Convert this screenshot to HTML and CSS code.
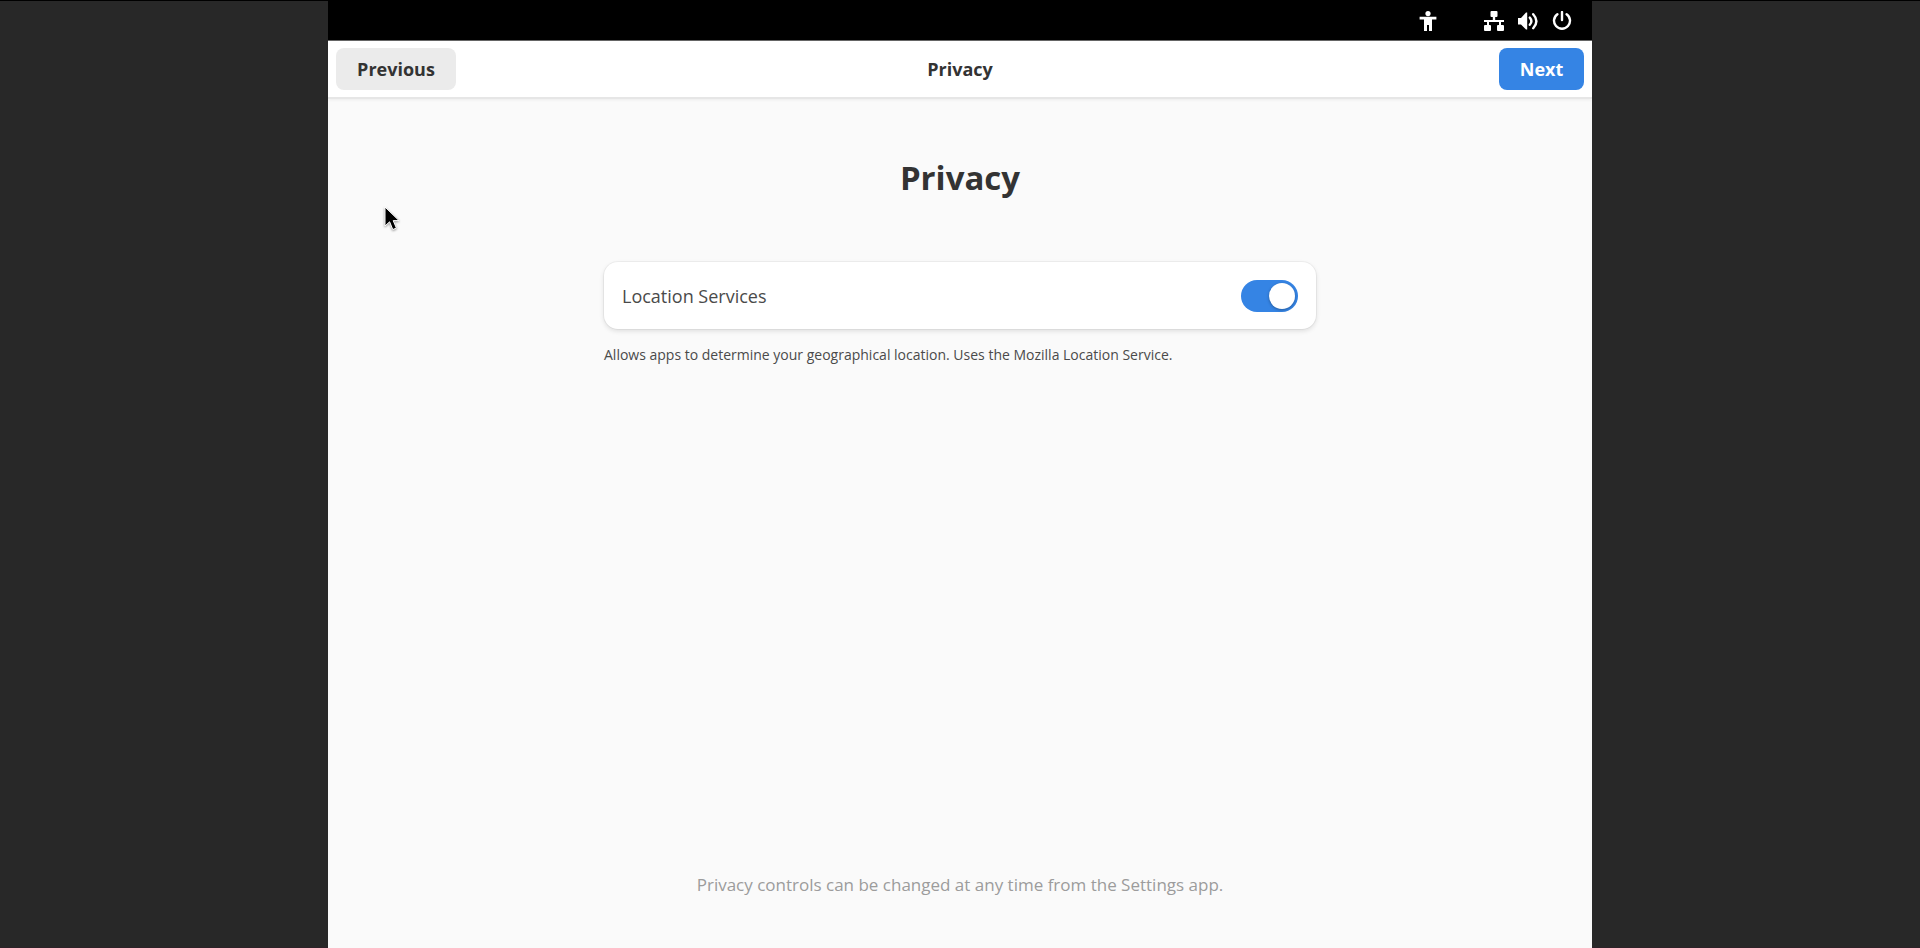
FILE: index.html
```html
<!DOCTYPE html>
<html lang="en">
<head>
  <meta charset="UTF-8">
  <title>Privacy</title>
  <link rel="stylesheet" href="styles.css">
</head>
<body>

  <div class="screen">

    <!-- top panel -->
    <div class="panel">
      <svg class="icon access" viewBox="0 0 20 20" aria-label="Accessibility">
        <circle cx="10" cy="2.600" r="2.600"/>
        <path d="M1.600 5.800h16.800v2.800H14V20h-3v-6H9v6H6V8.600H1.600z"/>
      </svg>
      <svg class="icon" viewBox="0 0 20 20" aria-label="Network">
        <path d="M7.500 0h5q1 0 1 1v4q0 1-1 1h-1.300v3H20v2h-3v3h2q1 0 1 1v4q0 1-1 1h-5q-1 0-1-1v-4q0-1 1-1h1v-3H5v3h1q1 0 1 1v4q0 1-1 1H1q-1 0-1-1v-4q0-1 1-1h2v-3H0V9h8.800V6H7.500q-1 0-1-1V1q0-1 1-1z"/>
      </svg>
      <svg class="icon" viewBox="0 0 20 20" aria-label="Volume">
        <path d="M0 7h3l5-5.400h1.200v17H8L3 13.400H0z"/>
        <path class="line" d="M11.800 6.600q3.200 3.600 0 7.200M15.200 3.200q6.400 7 0 14"/>
      </svg>
      <svg class="icon" viewBox="0 0 20 20" aria-label="Power">
        <path class="line" d="M5.400 3.200a8 8 0 1 0 9.200 0M10 1v8"/>
      </svg>
    </div>

    <header class="headerbar">
      <button type="button" class="btn">Previous</button>
      <span class="title">Privacy</span>
      <button type="button" class="btn next">Next</button>
    </header>

    <main class="page">
      <h1>Privacy</h1>

      <div class="group">
        <div class="row">
          <label for="location">Location Services</label>
          <input type="checkbox" class="switch" id="location" checked>
        </div>
        <p class="hint">Allows apps to determine your geographical location. Uses the Mozilla Location Service.</p>
      </div>

      <p class="footer">Privacy controls can be changed at any time from the Settings app.</p>
    </main>

    <!-- mouse pointer -->
    <svg class="cursor" viewBox="0 0 16 26">
      <path d="M1 1v19l4.600-4.200 3.200 7.800 3.600-1.600-3.200-7.400H15z"/>
    </svg>
  </div>

</body>
</html>
```
FILE: styles.css
```css
* {
  box-sizing: border-box;
}

body {
  margin: 0;
  height: 100vh;
  background-color: #282828;
  box-shadow: inset 0 1px #000, inset 0 -1px #2e2228;
  font-family: "Open Sans", sans-serif;
  font-size: 18px;
  color: #333;
}

.screen {
  position: relative;
  display: flex;
  flex-direction: column;
  height: 100vh;
  aspect-ratio: 4 / 3;
  margin: 0 auto;
  background-color: #fafafa;
}

.panel {
  display: flex;
  align-items: center;
  justify-content: flex-end;
  gap: 14px;
  height: 41px;
  padding: 1px 20px 0 0;
  background-color: #000;
  border-bottom: 1px solid #666;
}

.icon {
  width: 20px;
  height: 20px;
  fill: #fff;
}

.access {
  margin-right: 32px;
}

.line {
  fill: none;
  stroke: #fff;
  stroke-width: 2.4;
  stroke-linecap: round;
}

.headerbar {
  display: flex;
  align-items: center;
  justify-content: space-between;
  height: 58px;
  padding: 0 8px;
  background-color: #fff;
  border-bottom: 2px solid #e6e6e6;
  box-shadow: 0 1px 3px rgba(0, 0, 0, 0.06);
}

.title {
  position: absolute;
  left: 50%;
  transform: translateX(-50%);
  font-weight: bold;
}

.btn {
  width: 120px;
  height: 42px;
  padding: 0;
  border: none;
  border-radius: 8px;
  background-color: #ebebeb;
  color: #333;
  font: inherit;
  font-weight: bold;
}

.next {
  width: 85px;
  background-color: #3584e4;
  color: #fff;
}

.page {
  flex: 1;
  display: flex;
  flex-direction: column;
  align-items: center;
  padding: 56px 24px 49px;
}

h1 {
  margin: 0;
  font-size: 33px;
  line-height: 46px;
}

.group {
  width: 100%;
  max-width: 712px;
  margin-top: 61px;
}

.row {
  display: flex;
  align-items: center;
  justify-content: space-between;
  height: 67px;
  padding: 0 18px;
  border-radius: 14px;
  background-color: #fff;
  box-shadow: 0 0 0 1px rgba(0, 0, 0, 0.04), 0 2px 5px rgba(0, 0, 0, 0.12);
}

.row label {
  color: #4a4a4a;
}

.switch {
  appearance: none;
  width: 57px;
  height: 32px;
  margin: 0;
  padding: 3px;
  border-radius: 16px;
  background-color: #ccc;
}

.switch::before {
  content: "";
  display: block;
  width: 26px;
  height: 26px;
  border-radius: 50%;
  background-color: #fff;
  box-shadow: 0 1px 3px rgba(0, 0, 0, 0.3);
}

.switch:checked {
  background-color: #3584e4;
}

.switch:checked::before {
  margin-left: auto;
}

.hint {
  margin: 14px 0 0;
  font-size: 14px;
  line-height: 24px;
  color: #4a4a4a;
}

.footer {
  margin: auto 0 0;
  font-size: 17px;
  line-height: 28px;
  color: #9c9c9c;
}

.cursor {
  position: absolute;
  left: 56px;
  top: 206px;
  width: 16px;
  height: 26px;
  fill: #000;
  stroke: #fff;
  filter: drop-shadow(0 1px 1px rgba(0, 0, 0, 0.4));
}
```
